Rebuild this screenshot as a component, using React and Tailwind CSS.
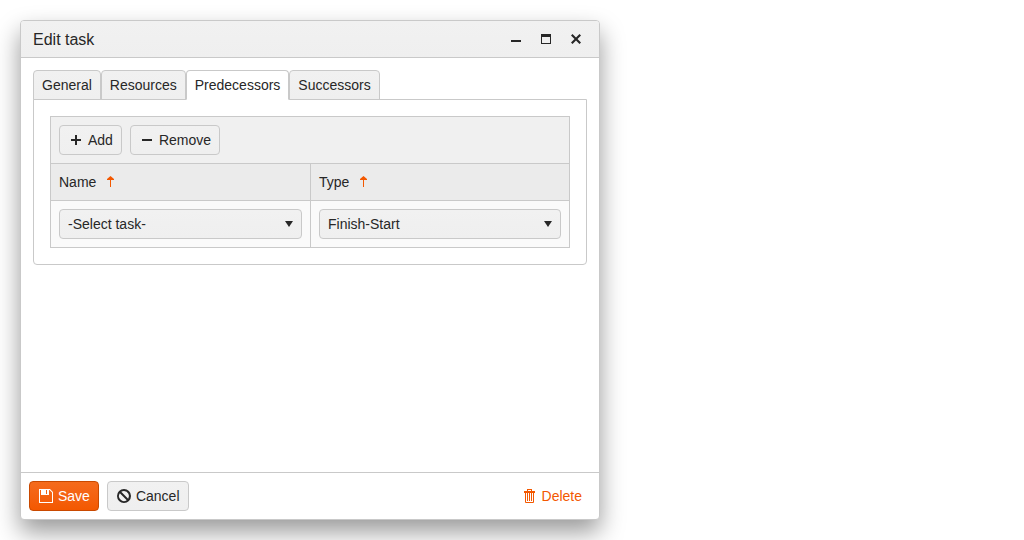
import { useState } from 'react';
import clsx from 'clsx';

const iconPaths = {
  minimize: 'M3 9h10v2H3z',
  maximize: 'M3 3h10v10H3zM4 6v6h8V6z',
  close: 'M13 4.5 11.5 3 8 6.5 4.5 3 3 4.5 6.5 8 3 11.5 4.5 13 8 9.5l3.5 3.5 1.5-1.5L9.5 8z',
  plus: 'M13 7H9V3H7v4H3v2h4v4h2V9h4z',
  minus: 'M3 7h10v2H3z',
  sort: 'M8.5 2 5 5v1h3v7h1V6h3V5z',
  save: 'M1 1h11l3 3v11H1zM2 2v12h12V4.5L11.5 2H11v5H3V2zM8 2v4h1V2z',
  cancel:
    'M8 1a7 7 0 1 0 0 14A7 7 0 0 0 8 1zM8 3a5 5 0 0 1 4.17 7.76L5.24 3.83A5 5 0 0 1 8 3zM3.83 5.24l6.93 6.93A5 5 0 0 1 3.83 5.24z',
  trash:
    'M5 1h5v2h3v2h-1v9a1 1 0 0 1-1 1H4a1 1 0 0 1-1-1V5H2V3h3zM6 2v1h3V2zM4 5v9h7V5zM5 5h1v8H5zM7 5h1v8H7zM9 5h1v8H9z',
};

function Icon({ name, className }) {
  return (
    <svg viewBox="0 0 16 16" aria-hidden="true" className={clsx('size-4 shrink-0', className)}>
      <path fill="currentColor" fillRule="evenodd" d={iconPaths[name]} />
    </svg>
  );
}

const variants = {
  base: 'border-[#c9c9c9] bg-linear-to-b from-[#f1f1f1] to-[#efefef] text-[#272727]',
  primary: 'border-[#c94900] bg-linear-to-b from-[#f56b1c] to-[#f35800] text-white',
  flat: 'border-transparent text-[#f35800]',
};

function Button({ icon, variant = 'base', children }) {
  return (
    <button
      type="button"
      className={clsx('flex items-center gap-1 rounded border px-2 py-1', variants[variant])}
    >
      <Icon name={icon} />
      {children}
    </button>
  );
}

function WindowButton({ icon, label }) {
  return (
    <button type="button" aria-label={label} className="flex h-9 w-[30px] items-center justify-center">
      <Icon name={icon} />
    </button>
  );
}

function Select({ label, options }) {
  return (
    <div className="relative">
      <select
        aria-label={label}
        className="block w-full appearance-none rounded border border-[#c9c9c9] bg-linear-to-b from-[#f1f1f1] to-[#efefef] py-1 pr-7 pl-2"
      >
        {options.map((option) => (
          <option key={option}>{option}</option>
        ))}
      </select>
      <svg
        viewBox="0 0 16 16"
        aria-hidden="true"
        className="pointer-events-none absolute inset-y-0 right-[5px] my-auto size-4"
      >
        <path fill="currentColor" d="M4 5h8l-4 6z" />
      </svg>
    </div>
  );
}

const tabs = ['General', 'Resources', 'Predecessors', 'Successors'];
const columns = ['Name', 'Type'];

export default function App() {
  const [active, setActive] = useState('Predecessors');

  return (
    <main className="p-5 font-['Liberation_Sans',Arial,sans-serif] text-sm leading-5 text-[#272727]">
      <section
        role="dialog"
        aria-labelledby="dialog-title"
        className="flex min-h-[500px] max-w-[580px] flex-col rounded border border-[#c9c9c9] bg-white shadow-[0_12px_24px_rgba(0,0,0,0.4)]"
      >
        <header className="flex items-center justify-between rounded-t-[3px] border-b border-[#c9c9c9] bg-linear-to-b from-[#f1f1f1] to-[#efefef] pr-2 pl-3">
          <h1 id="dialog-title" className="pt-0.5 text-base">
            Edit task
          </h1>
          <div className="flex">
            <WindowButton icon="minimize" label="Minimize" />
            <WindowButton icon="maximize" label="Maximize" />
            <WindowButton icon="close" label="Close" />
          </div>
        </header>

        <div className="grow p-3">
          <div role="tablist" className="flex">
            {tabs.map((tab) => (
              <button
                key={tab}
                type="button"
                role="tab"
                id={`tab-${tab}`}
                aria-selected={tab === active}
                aria-controls="tab-panel"
                onClick={() => setActive(tab)}
                className={clsx(
                  'relative -mb-px rounded-t border border-[#c9c9c9] px-2 py-1',
                  tab === active ? 'border-b-white bg-white' : 'bg-linear-to-b from-[#f1f1f1] to-[#efefef]',
                )}
              >
                {tab}
              </button>
            ))}
          </div>

          <div
            role="tabpanel"
            id="tab-panel"
            aria-labelledby={`tab-${active}`}
            className="rounded-b border border-[#c9c9c9] p-4"
          >
            <div className="border border-[#c9c9c9]">
              <div className="flex gap-2 border-b border-[#c9c9c9] bg-[#f0f0f0] p-2">
                <Button icon="plus">Add</Button>
                <Button icon="minus">Remove</Button>
              </div>
              <table className="w-full table-fixed border-separate border-spacing-0">
                <thead>
                  <tr className="bg-[#ebebeb]">
                    {columns.map((column) => (
                      <th
                        key={column}
                        scope="col"
                        aria-sort="ascending"
                        className="border-b border-l border-[#c9c9c9] p-2 text-left font-normal first:border-l-0"
                      >
                        <span className="flex items-center gap-1.5">
                          {column}
                          <Icon name="sort" className="text-[#f35800]" />
                        </span>
                      </th>
                    ))}
                  </tr>
                </thead>
                <tbody>
                  <tr className="bg-[#fafafa]">
                    <td className="p-2">
                      <Select label="Name" options={['-Select task-']} />
                    </td>
                    <td className="border-l border-[#c9c9c9] p-2">
                      <Select
                        label="Type"
                        options={['Finish-Start', 'Finish-Finish', 'Start-Finish', 'Start-Start']}
                      />
                    </td>
                  </tr>
                </tbody>
              </table>
            </div>
          </div>
        </div>

        <footer className="flex gap-2 border-t border-[#c9c9c9] p-2">
          <Button icon="save" variant="primary">
            Save
          </Button>
          <Button icon="cancel">Cancel</Button>
          <div className="ml-auto">
            <Button icon="trash" variant="flat">
              Delete
            </Button>
          </div>
        </footer>
      </section>
    </main>
  );
}
